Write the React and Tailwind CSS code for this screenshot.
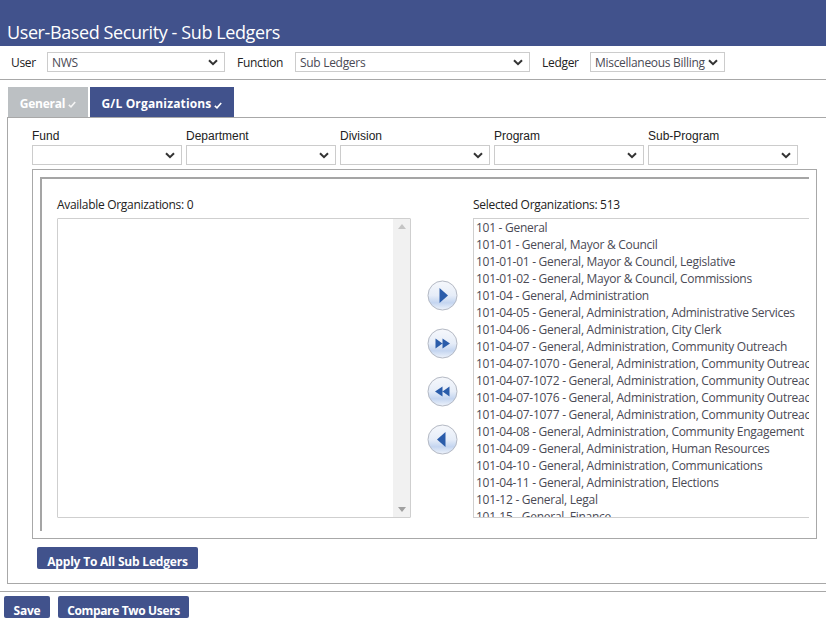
const rows = [
  "101 - General",
  "101-01 - General, Mayor & Council",
  "101-01-01 - General, Mayor & Council, Legislative",
  "101-01-02 - General, Mayor & Council, Commissions",
  "101-04 - General, Administration",
  "101-04-05 - General, Administration, Administrative Services",
  "101-04-06 - General, Administration, City Clerk",
  "101-04-07 - General, Administration, Community Outreach",
  "101-04-07-1070 - General, Administration, Community Outreach",
  "101-04-07-1072 - General, Administration, Community Outreach",
  "101-04-07-1076 - General, Administration, Community Outreach",
  "101-04-07-1077 - General, Administration, Community Outreach",
  "101-04-08 - General, Administration, Community Engagement",
  "101-04-09 - General, Administration, Human Resources",
  "101-04-10 - General, Administration, Communications",
  "101-04-11 - General, Administration, Elections",
  "101-12 - General, Legal",
  "101-15 - General, Finance",
];

const ui = "font-['Open_Sans',sans-serif]";

function Chevron() {
  return (
    <svg width="10" height="7" viewBox="0 0 10 7" className="shrink-0">
      <path d="M1 1.2 L5 5.2 L9 1.2" fill="none" stroke="#333" strokeWidth="2" />
    </svg>
  );
}

function Select({ value, className }) {
  return (
    <div className={`h-5 border border-[#cccccc] bg-white flex items-center justify-between pl-[4px] pr-[6px] text-[12px] tracking-[-0.3px] text-[#4a4a55] ${ui} ${className}`}>
      <span className="whitespace-nowrap pt-px">{value}</span>
      <Chevron />
    </div>
  );
}

function Check({ className, stroke }) {
  return (
    <svg width="8" height="7" viewBox="0 0 8 7" className={className}>
      <path d="M0.8 3.8 L3 5.8 L7.2 1" fill="none" stroke={stroke} strokeWidth="1.6" />
    </svg>
  );
}

function Round({ id, d }) {
  return (
    <svg width="31" height="31" viewBox="0 0 31 31">
      <defs>
        <linearGradient id={id} x1="0" y1="0" x2="0" y2="1">
          <stop offset="0" stopColor="#f6f8fc" />
          <stop offset="0.5" stopColor="#e6edf8" />
          <stop offset="0.75" stopColor="#c4d5f0" />
          <stop offset="1" stopColor="#eef3fb" />
        </linearGradient>
      </defs>
      <circle cx="15.5" cy="15.5" r="14.5" fill={`url(#${id})`} stroke="#b4b9c4" strokeWidth="1" />
      <path d={d} fill="#2a5caa" />
    </svg>
  );
}

function Btn({ children, className }) {
  return (
    <div className={`h-[22px] bg-[#41528c] rounded-[2px] text-white font-bold text-[12px] flex items-end justify-center ${ui} ${className}`}>
      {children}
    </div>
  );
}

export default function App() {
  return (
    <div className={`w-[826px] h-[623px] overflow-hidden bg-white ${ui}`}>
      <div className="h-[46px] bg-[#41528c] text-white text-[18px] tracking-[-0.4px] flex items-end pl-[7px] leading-[28px]">
        User-Based Security - Sub Ledgers
      </div>

      <div className="h-[34px] border-b border-[#a8a8a8] flex items-start pt-[6px] text-[12px] tracking-[-0.3px] text-[#222]">
        <span className="ml-[11px] w-[36px] leading-[22px]">User</span>
        <Select value="NWS" className="w-[178px]" />
        <span className="ml-[12px] w-[58px] leading-[22px]">Function</span>
        <Select value="Sub Ledgers" className="w-[235px]" />
        <span className="ml-[12px] w-[48px] leading-[22px]">Ledger</span>
        <Select value="Miscellaneous Billing" className="w-[135px]" />
      </div>

      <div className="flex gap-[2px] pl-[8px] pt-[7px] h-[37px]">
        <div className="w-[80px] h-[30px] bg-[#bcc0c3] text-white font-bold text-[12px] tracking-[-0.25px] flex items-center justify-center gap-[3px] pt-[3px]">
          General
          <Check className="mt-[2px]" stroke="#f4f4f4" />
        </div>
        <div className="w-[144px] h-[30px] bg-[#41528c] text-white font-bold text-[12px] tracking-[0.15px] flex items-center justify-center gap-[3px] pt-[3px]">
          G/L Organizations
          <Check className="mt-[3px]" stroke="#ffffff" />
        </div>
      </div>

      <div className="ml-[7px] w-[830px] h-[467px] border border-r-0 border-[#a8a8a8]">
        <div className="flex gap-1 pl-[24px] pt-[11px] font-['Liberation_Sans',sans-serif]">
          {["Fund", "Department", "Division", "Program", "Sub-Program"].map((label) => (
            <div key={label} className="w-[150px]">
              <div className="h-[16px] text-[12px] leading-[14px] text-[#222]">{label}</div>
              <Select value="" className="w-[150px]" />
            </div>
          ))}
        </div>

        <div className="ml-[24px] mt-[4px] w-[785px] h-[370px] border border-[#a8a8a8] px-[7px] pt-[7px]">
          <div className={`h-[354px] border-t-2 border-l-2 border-[#a5a5a5] ${ui}`}>
            <div className="flex pl-[15px] pt-[17px]">
              <div className="w-[354px]">
                <div className="h-[22px] text-[12px] tracking-[-0.3px] text-[#222] leading-[18px]">Available Organizations: 0</div>
                <div className="h-[300px] border border-[#cfcfcf] rounded-[1px] flex justify-end">
                  <div className="w-[17px] bg-[#f1f1f1] flex flex-col items-center justify-between py-[5px]">
                    <div className="w-0 h-0 border-x-[4px] border-x-transparent border-b-[5px] border-b-[#c4c4c4]" />
                    <div className="w-0 h-0 border-x-[4px] border-x-transparent border-t-[5px] border-t-[#a0a0a0]" />
                  </div>
                </div>
              </div>
              <div className="w-[62px] pt-[84px] pl-[16px] flex flex-col gap-[17px]">
                <Round id="a" d="M12.5 8 L21 15.5 L12.5 23 Z" />
                <Round id="b" d="M8.5 10.5 L15.5 15.5 L8.5 20.5 Z M15.5 10.5 L23 15.5 L15.5 20.5 Z" />
                <Round id="c" d="M22.5 10.5 L15.5 15.5 L22.5 20.5 Z M15.5 10.5 L8 15.5 L15.5 20.5 Z" />
                <Round id="d" d="M18.5 8 L10 15.5 L18.5 23 Z" />
              </div>
              <div className="w-[336px]">
                <div className="h-[22px] text-[12px] tracking-[-0.3px] text-[#222] leading-[18px]">Selected Organizations: 513</div>
                <div className="h-[300px] border border-r-0 border-[#cfcfcf] overflow-hidden pl-[2px] text-[12px] tracking-[-0.27px] leading-[17px] text-[#4a4a55]">
                  {rows.map((r) => (
                    <div key={r} className="h-[17px] whitespace-nowrap">{r}</div>
                  ))}
                </div>
              </div>
            </div>
          </div>
        </div>

        <Btn className="ml-[29px] mt-[8px] w-[161px] tracking-[-0.2px] leading-[15px]">Apply To All Sub Ledgers</Btn>
      </div>

      <div className="mt-[7px] border-t border-[#a8a8a8] flex gap-2 pl-[4px] pt-[4px]">
        <Btn className="w-[46px] tracking-[-0.2px] leading-[15px]">Save</Btn>
        <Btn className="w-[131px] tracking-[-0.35px] leading-[15px]">Compare Two Users</Btn>
      </div>
    </div>
  );
}
